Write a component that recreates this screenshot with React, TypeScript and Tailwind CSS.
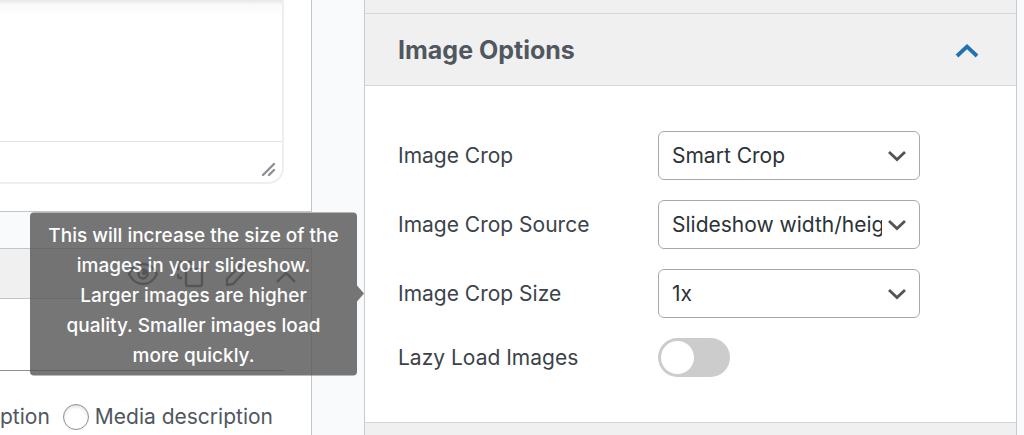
import React, { useState } from 'react';

const CROP_OPTIONS = ['Smart Crop', 'Standard', 'Disabled'];
const SOURCE_OPTIONS = ['Slideshow width/height', 'Image width/height'];
const SIZE_OPTIONS = ['1x', '2x', '3x', '4x'];

type SelectRowProps = {
  id: string;
  label: string;
  options: string[];
  tooltip?: string;
};

const Tooltip = ({ id, text }: { id: string; text: string }) => (
  <div
    id={id}
    role="tooltip"
    className="absolute right-full top-1/2 z-10 mr-[34px] flex -translate-y-1/2 items-center opacity-80"
  >
    <p className="w-[327px] rounded bg-[#555] px-4 pt-2 pb-[5px] text-center text-[19px] leading-[30px] font-medium text-white">
      {text}
    </p>
    <span className="h-0 w-0 border-y-8 border-l-[7px] border-y-transparent border-l-[#555]" />
  </div>
);

const SelectRow = ({ id, label, options, tooltip }: SelectRowProps) => (
  <div className="relative flex items-center">
    {tooltip && <Tooltip id={`${id}-tip`} text={tooltip} />}
    <label htmlFor={id} className="w-[260px] shrink-0 text-[#3c434a]">
      {label}
    </label>
    <div className="relative w-[262px]">
      <select
        id={id}
        aria-describedby={tooltip ? `${id}-tip` : undefined}
        className="block h-[49px] w-full appearance-none rounded-md border border-[#a7aaad] bg-white pt-px pr-[37px] pl-[13px] text-[#2c3338]"
      >
        {options.map((option) => (
          <option key={option}>{option}</option>
        ))}
      </select>
      <svg
        viewBox="0 0 18 12"
        className="pointer-events-none absolute top-[19px] right-[14px] h-3 w-[18px]"
        fill="none"
        stroke="#50555a"
        strokeWidth="2.8"
      >
        <path d="M1 2 9 9.6 17 2" />
      </svg>
    </div>
  </div>
);

const SlideToolbar = () => (
  <div className="flex h-[50px] items-center justify-end border-b border-[#c3c4c7] bg-[#f0f0f0] pr-3 text-[#50575e]">
    <button type="button" aria-label="Toggle visibility" className="mr-[18px]">
      <svg viewBox="0 0 32 28" className="h-7 w-8" fill="none" stroke="currentColor" strokeWidth="2.4">
        <path d="M2 14C5 8 10 4 16 4s11 4 14 10c-3 6-8 10-14 10S5 20 2 14Z" />
        <circle cx="16" cy="14" r="4.5" />
        <circle cx="17" cy="13" r="1" />
      </svg>
    </button>
    <button type="button" aria-label="Duplicate slide" className="mr-5">
      <svg viewBox="0 0 28 28" className="size-7" fill="none" stroke="currentColor" strokeWidth="2.4" strokeLinejoin="round">
        <rect x="9" y="9" width="16" height="17" rx="2" />
        <path d="M5 18H3a2 2 0 0 1-2-2V14M1 10V3M1 2h5M10 2h5v3" />
      </svg>
    </button>
    <button type="button" aria-label="Edit slide" className="mr-6">
      <svg viewBox="0 0 24 28" className="h-7 w-6" fill="none" stroke="currentColor" strokeWidth="2.4" strokeLinejoin="round">
        <path d="M2 25v-6L16 5c2-2 7 2 5 5L8 24Z" />
      </svg>
    </button>
    <button type="button" aria-label="Collapse slide">
      <svg viewBox="0 0 26 28" className="h-7 w-[26px]" fill="none" stroke="currentColor" strokeWidth="2.4">
        <path d="m4 22 9-9 9 9" />
      </svg>
    </button>
  </div>
);

const SlidesColumn = () => (
  <div className="flex w-[312px] shrink-0 flex-col text-[#50575e]">
    <div className="border-r border-b border-[#c3c4c7] bg-white pr-[27px] pb-[27px]">
      {/* Caption editor */}
      <div className="rounded-br-[16px] border-r-2 border-b-2 border-[#eee]">
        <div className="h-[141px] bg-linear-to-b from-[#e6e8eb] via-[#fafafa] via-[5px] to-white to-[16px]" />
        <div className="flex h-[41px] items-end justify-end border-t border-[#e3e3e3] pr-1.5 pb-1">
          <svg viewBox="0 0 16 16" className="size-4" fill="none" stroke="#8c9096" strokeWidth="2.4" strokeLinecap="round">
            <path d="M3 13 14 2M9 13l5-5" />
          </svg>
        </div>
      </div>
    </div>

    <div className="mt-9 grow border-t border-r border-[#c3c4c7] bg-white">
      <SlideToolbar />
      <div className="mt-[71px] mr-[27px] border-t border-[#8c8f94]" />
      <div className="mt-[31px] flex h-[30px] items-center whitespace-nowrap">
        <span>ption</span>
        <input
          type="radio"
          id="media-description"
          name="description-source"
          className="mr-1.5 ml-[13px] size-[26px] shrink-0 appearance-none rounded-full border border-[#8c8f94] bg-white shadow-[inset_0_2px_3px_rgba(0,0,0,0.12)]"
        />
        <label htmlFor="media-description">Media description</label>
      </div>
    </div>
  </div>
);

const App = () => {
  const [open, setOpen] = useState(true);

  return (
    <main className="flex min-h-screen overflow-hidden bg-[#f8fafc] font-['Inter',sans-serif] text-[21px] leading-[30px]">
      <SlidesColumn />

      <section className="mr-[7px] ml-[52px] flex grow flex-col border-x border-[#c9cbd1] bg-white">
        <div className="h-[14px] border-b border-[#d5d6d8] bg-[#f0f0f0]" />
        <h2 className="border-b border-[#d5d6d8] bg-[#f0f0f0] font-bold text-[#50575e]">
          <button
            type="button"
            aria-expanded={open}
            onClick={() => setOpen(!open)}
            className="flex h-[71px] w-full items-center justify-between pr-[37px] pl-[33px] text-[25px]"
          >
            Image Options
            <svg viewBox="0 0 24 16" className="h-4 w-6" fill="none" stroke="#2271b1" strokeWidth="3.8">
              <path d="M2 14 12 4.7 22 14" />
            </svg>
          </button>
        </h2>

        {open && (
          <div className="flex flex-col gap-5 pt-[45px] pb-[45px] pl-[33px]">
            <SelectRow id="image-crop" label="Image Crop" options={CROP_OPTIONS} />
            <SelectRow id="crop-source" label="Image Crop Source" options={SOURCE_OPTIONS} />
            <SelectRow
              id="crop-size"
              label="Image Crop Size"
              options={SIZE_OPTIONS}
              tooltip="This will increase the size of the images in your slideshow. Larger images are higher quality. Smaller images load more quickly."
            />
            <div className="flex items-center">
              <label htmlFor="lazy-load" className="w-[260px] text-[#3c434a]">
                Lazy Load Images
              </label>
              <input
                type="checkbox"
                id="lazy-load"
                role="switch"
                className="h-[39px] w-[72px] appearance-none rounded-full bg-[#ccc] p-[3px] before:block before:size-[33px] before:rounded-full before:bg-white checked:bg-[#2271b1] checked:before:ml-[33px]"
              />
            </div>
          </div>
        )}
        <div className="grow border-t border-[#d5d6d8] bg-[#f0f0f0]" />
      </section>
    </main>
  );
};

export default App;
